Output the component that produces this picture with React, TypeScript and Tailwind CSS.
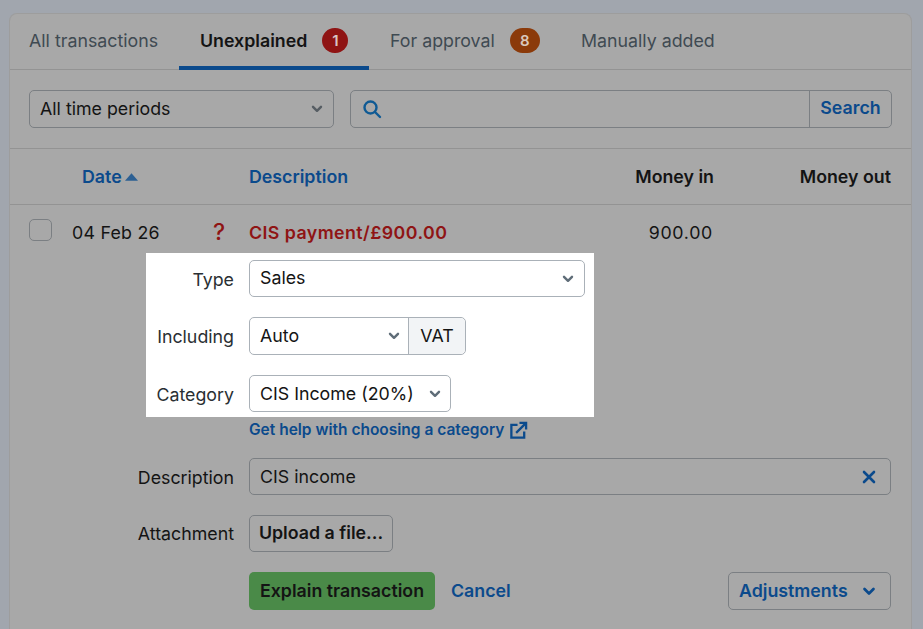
import React from "react";

const Chevron = ({ className }: { className: string }) => (
  <svg viewBox="0 0 12 8" className={className} fill="none" stroke="currentColor" strokeWidth="2.4" strokeLinecap="round" strokeLinejoin="round">
    <path d="M2 1.8 6 5.8 10 1.8" />
  </svg>
);

const Label = ({ children }: { children: React.ReactNode }) => (
  <div className="w-[88px] whitespace-nowrap pt-[2px] flex justify-end text-[#2a2f33]">{children}</div>
);

export default function App() {
  return (
    <div className="h-[629px] w-[923px] overflow-hidden bg-[#a1a6ae] pl-[9px] pt-[13px] font-['Inter',sans-serif] text-[17.8px] leading-[24px] text-[#141414]">
      <div className="h-[640px] w-[903px] rounded-t-[8px] border border-b-0 border-[#9d9d9d] bg-[#a8a8a8]">
        <div className="flex h-[56px] border-b border-[#939393] text-[#3f4a52]">
          <div className="flex w-[169px] items-start whitespace-nowrap pl-[19px] pt-[15px]">All transactions</div>
          <div className="-mb-px flex h-[56px] w-[190px] items-start whitespace-nowrap border-b-4 border-[#0b4a8c] pl-[21px] pt-[15px]">
            <span className="font-semibold text-[#141414]">Unexplained</span>
            <span className="-mt-[1px] ml-[15px] flex h-[25px] w-[26px] items-center justify-center rounded-full bg-[#8f1414] text-[15px] font-semibold text-[#d9c4c4]">1</span>
          </div>
          <div className="flex w-[191px] items-start whitespace-nowrap pl-[21px] pt-[15px]">
            <span>For approval</span>
            <span className="-mt-[1px] ml-[15px] flex h-[25px] w-[30px] items-center justify-center rounded-full bg-[#8b3a0a] text-[15px] font-semibold text-[#d9c8bd]">8</span>
          </div>
          <div className="flex items-start whitespace-nowrap pl-[21px] pt-[15px]">Manually added</div>
        </div>

        <div className="flex h-[79px] items-start gap-[16px] border-b border-[#939393] pl-[19px] pt-[20px]">
          <div className="flex h-[38px] w-[305px] items-center justify-between rounded-[5px] border border-[#7b7f83] pl-[10px] pr-[10px]">
            <span>All time periods</span>
            <Chevron className="h-[8px] w-[12px] text-[#565d63]" />
          </div>
          <div className="flex h-[38px] w-[542px] items-center rounded-[5px] border border-[#7b7f83]">
            <div className="flex flex-1 items-center pl-[11px]">
              <svg viewBox="0 0 20 20" className="h-[20px] w-[20px] text-[#0f5a94]" fill="none" stroke="currentColor" strokeWidth="2.4" strokeLinecap="round">
                <circle cx="8.5" cy="8.5" r="6" />
                <path d="M13 13 18 18" />
              </svg>
            </div>
            <div className="flex h-full w-[82px] items-center justify-center border-l border-[#7b7f83] pb-[2px] font-semibold text-[#0b4a8c]">Search</div>
          </div>
        </div>

        <div className="flex h-[56px] items-center border-b border-[#939393] font-semibold">
          <div className="flex w-[239px] items-center pl-[72px] text-[#0b4a8c]">
            Date
            <svg viewBox="0 0 14 8" className="ml-[3px] h-[8px] w-[13px] text-[#2d6093]" fill="currentColor"><path d="M7 0 14 8H0Z" /></svg>
          </div>
          <div className="w-[226px] text-[#0b4a8c]">Description</div>
          <div className="w-[239px] whitespace-nowrap text-right">Money in</div>
          <div className="w-[177px] whitespace-nowrap text-right">Money out</div>
        </div>

        <div className="flex h-[48px] items-center pt-[7px]">
          <div className="ml-[19px] -mt-[5px] h-[22px] w-[23px] rounded-[5px] border border-[#7b7f83]" />
          <div className="ml-[20px] w-[141px] whitespace-nowrap tracking-[0.25px]">04 Feb 26</div>
          <div className="-mt-[1px] w-[36px] text-[23px] font-medium text-[#8f1414]">?</div>
          <div className="w-[225px] whitespace-nowrap font-semibold tracking-[0.42px] text-[#8f1414]">CIS payment/£900.00</div>
          <div className="w-[239px] text-right tracking-[0.7px]">900.00</div>
        </div>

        <div className="ml-[136px] h-[164px] w-[448px] bg-white pt-[7px]">
          <div className="flex h-[37px] items-center">
            <Label>Type</Label>
            <div className="ml-[15px] flex h-[37px] w-[336px] items-center justify-between rounded-[5px] border border-[#aab1b8] px-[10px]">
              <span className="-mt-px">Sales</span>
              <Chevron className="h-[8px] w-[12px] text-[#5f6d78]" />
            </div>
          </div>
          <div className="mt-[20px] flex h-[38px] items-center">
            <Label>Including</Label>
            <div className="ml-[15px] flex h-[38px] w-[217px] items-stretch rounded-[5px] border border-[#aab1b8]">
              <div className="flex flex-1 items-center justify-between pl-[10px] pr-[8px]">
                <span>Auto</span>
                <Chevron className="h-[8px] w-[12px] text-[#5f6d78]" />
              </div>
              <div className="flex w-[57px] items-center justify-center rounded-r-[5px] border-l border-[#aab1b8] bg-[#f2f4f6]">VAT</div>
            </div>
          </div>
          <div className="mt-[20px] flex h-[37px] items-center">
            <Label>Category</Label>
            <div className="ml-[15px] flex h-[37px] w-[202px] items-center justify-between rounded-[5px] border border-[#aab1b8] pl-[10px] pr-[9px]">
              <span className="whitespace-nowrap">CIS Income (20%)</span>
              <Chevron className="h-[8px] w-[12px] text-[#5f6d78]" />
            </div>
          </div>
        </div>

        <div className="ml-[239px] mt-[1px] flex h-[24px] items-center whitespace-nowrap text-[15.5px] font-semibold text-[#0b4a8c]">
          Get help with choosing a category
          <svg viewBox="0 0 20 20" className="ml-[5px] h-[19px] w-[19px]" fill="none" stroke="currentColor" strokeWidth="2.4">
            <path d="M9 4H2.5V17.5H16V11" />
            <path d="M7.5 12.5 17.5 2.5M11 2H18V9" />
          </svg>
        </div>

        <div className="mt-[16px] flex h-[37px] items-center">
          <div className="ml-[136px] flex w-[88px] justify-end whitespace-nowrap pt-[2px]">Description</div>
          <div className="ml-[15px] flex h-[37px] w-[642px] items-center justify-between rounded-[5px] border border-[#7b7f83] pl-[10px] pr-[14px]">
            <span>CIS income</span>
            <svg viewBox="0 0 14 14" className="h-[14px] w-[14px] text-[#0b4a8c]" fill="none" stroke="currentColor" strokeWidth="2.6" strokeLinecap="round">
              <path d="M2 2 12 12M12 2 2 12" />
            </svg>
          </div>
        </div>

        <div className="mt-[20px] flex h-[37px] items-center">
          <div className="ml-[126px] flex w-[98px] justify-end whitespace-nowrap pt-[1px]">Attachment</div>
          <div className="ml-[15px] flex h-[37px] w-[144px] items-center justify-center whitespace-nowrap rounded-[5px] border border-[#7b7f83] pb-[1px] font-semibold">Upload a file...</div>
        </div>

        <div className="mt-[20px] flex h-[38px] items-center pl-[239px] pr-[20px]">
          <div className="flex h-[38px] w-[186px] items-center justify-center whitespace-nowrap rounded-[5px] bg-[#4a8a48] font-semibold">Explain transaction</div>
          <div className="ml-[16px] font-semibold text-[#0b4a8c]">Cancel</div>
          <div className="ml-auto flex h-[38px] w-[163px] items-center justify-between whitespace-nowrap rounded-[5px] border border-[#7b7f83] pl-[10px] pr-[14px] font-semibold text-[#0b4a8c]">
            Adjustments
            <Chevron className="h-[9px] w-[14px]" />
          </div>
        </div>
      </div>
    </div>
  );
}
